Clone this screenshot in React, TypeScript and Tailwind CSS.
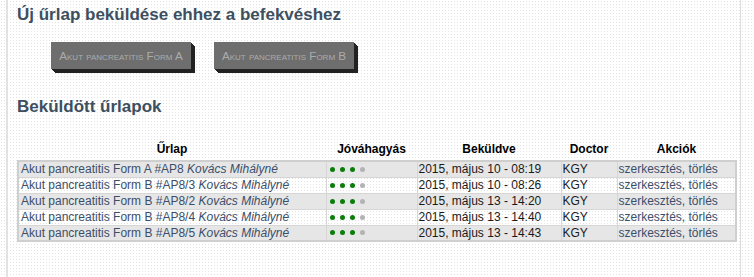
import React from 'react';

interface Submission {
  form: string;
  code: string;
  patient: string;
  approved: number;
  sent: string;
  doctor: string;
}

const rows: Submission[] = [
  { form: 'Akut pancreatitis Form A', code: '#AP8', patient: 'Kovács Mihályné', approved: 3, sent: '2015, május 10 - 08:19', doctor: 'KGY' },
  { form: 'Akut pancreatitis Form B', code: '#AP8/3', patient: 'Kovács Mihályné', approved: 3, sent: '2015, május 10 - 08:26', doctor: 'KGY' },
  { form: 'Akut pancreatitis Form B', code: '#AP8/2', patient: 'Kovács Mihályné', approved: 3, sent: '2015, május 13 - 14:20', doctor: 'KGY' },
  { form: 'Akut pancreatitis Form B', code: '#AP8/4', patient: 'Kovács Mihályné', approved: 3, sent: '2015, május 13 - 14:40', doctor: 'KGY' },
  { form: 'Akut pancreatitis Form B', code: '#AP8/5', patient: 'Kovács Mihályné', approved: 3, sent: '2015, május 13 - 14:43', doctor: 'KGY' },
];

function FormButton({ label }: { label: string }) {
  return (
    <button className="w-[140px] h-[27px] bg-[#6e6e6e] text-[#ababab] text-[11.7px] leading-none whitespace-nowrap [font-variant:small-caps] shadow-[1px_1px_0_#222,2px_2px_0_#222,3px_3px_0_#222,4px_4px_0_#222]">
      {label}
    </button>
  );
}

function Dots({ count }: { count: number }) {
  return (
    <div className="flex gap-[5px] pl-[2px]">
      {[0, 1, 2, 3].map((i) => (
        <span
          key={i}
          className={i < count ? 'w-[5px] h-[5px] rounded-full bg-[#0b7d0b]' : 'w-[5px] h-[5px] rounded-full bg-[#b3b3b3]'}
        />
      ))}
    </div>
  );
}

export default function App() {
  return (
    <div className="w-[754px] h-[277px] overflow-hidden bg-white bg-[radial-gradient(#e2e2e2_0.7px,transparent_0.8px)] bg-[length:3px_3px] font-['Liberation_Sans',Arial,sans-serif]">
      <div className="ml-[6px] w-[735px] h-full border-l-2 border-l-[#e2e2e2] border-r border-r-[#dcdcdc] pl-[9px]">
        <h1 className="pt-[4px] text-[17px] leading-[22px] font-bold text-[#3d4f5f]">
          Új űrlap beküldése ehhez a befekvéshez
        </h1>
        <div className="flex gap-[23px] mt-[16px] ml-[34px]">
          <FormButton label="Akut pancreatitis Form A" />
          <FormButton label="Akut pancreatitis Form B" />
        </div>
        <h2 className="mt-[27px] text-[17px] leading-[22px] font-bold text-[#3d4f5f]">
          Beküldött űrlapok
        </h2>
        <table className="mt-[20px] w-[718px] border-collapse text-[12px] leading-[14px] table-fixed">
          <colgroup>
            <col className="w-[308px]" />
            <col className="w-[91px]" />
            <col className="w-[144px]" />
            <col className="w-[56px]" />
            <col className="w-[119px]" />
          </colgroup>
          <thead>
            <tr className="h-[23px]">
              <th className="font-bold text-black text-center">Űrlap</th>
              <th className="font-bold text-black text-center">Jóváhagyás</th>
              <th className="font-bold text-black text-center">Beküldve</th>
              <th className="font-bold text-black text-center">Doctor</th>
              <th className="font-bold text-black text-center">Akciók</th>
            </tr>
          </thead>
          <tbody className="border-2 border-[#cfcfcf]">
            {rows.map((r, i) => (
              <tr key={r.code} className={i % 2 === 0 ? 'bg-[#e6e6e6]' : ''}>
                <td className="border border-[#d6d6d6] px-[2px] py-0 h-[16px] text-[#3b4f6b] whitespace-nowrap">
                  {r.form} {r.code} <i>{r.patient}</i>
                </td>
                <td className="border border-[#d6d6d6] px-[1px] py-0 h-[16px]">
                  <Dots count={r.approved} />
                </td>
                <td className="border border-[#d6d6d6] px-[1px] py-0 h-[16px] text-[#1a1a1a] whitespace-nowrap">{r.sent}</td>
                <td className="border border-[#d6d6d6] px-[1px] py-0 h-[16px] text-[#1a1a1a]">{r.doctor}</td>
                <td className="border border-[#d6d6d6] px-[1px] py-0 h-[16px] text-[#3b4f6b] whitespace-nowrap">szerkesztés, törlés</td>
              </tr>
            ))}
          </tbody>
        </table>
      </div>
    </div>
  );
}
